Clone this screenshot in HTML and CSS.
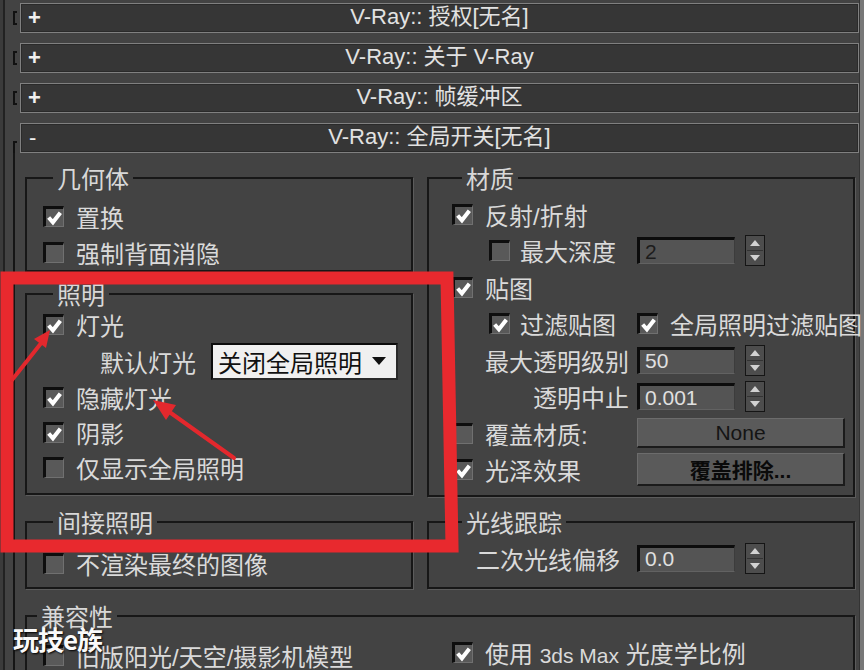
FILE: index.html
```html
<!DOCTYPE html>
<html lang="zh-CN">
<head>
    <meta charset="UTF-8">
    <title>V-Ray 全局开关</title>
    <link rel="stylesheet" href="styles.css">
</head>
<body>
<div class="panel">
    <div class="bar-row">
        <span class="bracket"></span>
        <div class="bar"><span class="sign">+</span><span class="title">V-Ray:: 授权[无名]</span></div>
    </div>
    <div class="bar-row">
        <span class="bracket"></span>
        <div class="bar"><span class="sign">+</span><span class="title">V-Ray:: 关于 V-Ray</span></div>
    </div>
    <div class="bar-row">
        <span class="bracket"></span>
        <div class="bar"><span class="sign">+</span><span class="title">V-Ray:: 帧缓冲区</span></div>
    </div>
    <div class="bar-row open">
        <span class="bracket"></span>
        <div class="bar"><span class="sign minus">-</span><span class="title">V-Ray:: 全局开关[无名]</span></div>
    </div>

    <div class="rollout-body">
        <div class="top-row">
            <div class="col-left">
                <fieldset class="group geometry">
                    <legend>几何体</legend>
                    <div class="row"><span class="cb on"><svg viewBox="0 0 16 16"><polyline points="2.5,8 6.5,12.5 13.5,3.5"/></svg></span><span>置换</span></div>
                    <div class="row"><span class="cb"></span><span>强制背面消隐</span></div>
                </fieldset>

                <fieldset class="group lighting">
                    <legend>照明</legend>
                    <div class="row"><span class="cb on"><svg viewBox="0 0 16 16"><polyline points="2.5,8 6.5,12.5 13.5,3.5"/></svg></span><span>灯光</span></div>
                    <div class="row sub">
                        <span>默认灯光</span>
                        <div class="select"><span>关闭全局照明</span><svg class="arrow" viewBox="0 0 14 8"><polygon points="0,0 14,0 7,8"/></svg></div>
                    </div>
                    <div class="row"><span class="cb on"><svg viewBox="0 0 16 16"><polyline points="2.5,8 6.5,12.5 13.5,3.5"/></svg></span><span>隐藏灯光</span></div>
                    <div class="row"><span class="cb on"><svg viewBox="0 0 16 16"><polyline points="2.5,8 6.5,12.5 13.5,3.5"/></svg></span><span>阴影</span></div>
                    <div class="row"><span class="cb"></span><span>仅显示全局照明</span></div>
                </fieldset>
            </div>

            <fieldset class="group material">
                <legend>材质</legend>
                <div class="row"><span class="cb on"><svg viewBox="0 0 16 16"><polyline points="2.5,8 6.5,12.5 13.5,3.5"/></svg></span><span>反射/折射</span></div>
                <div class="grid-row">
                    <div class="cell indent"><span class="cb"></span><span>最大深度</span></div>
                    <div class="field"><span class="num off">2</span><svg class="spin" viewBox="0 0 20 31"><rect x="0.5" y="0.5" width="19" height="30"/><line x1="2" y1="15.5" x2="18" y2="15.5"/><polygon points="5,11 15,11 10,5"/><polygon points="5,20 15,20 10,26"/></svg></div>
                </div>
                <div class="row"><span class="cb on"><svg viewBox="0 0 16 16"><polyline points="2.5,8 6.5,12.5 13.5,3.5"/></svg></span><span>贴图</span></div>
                <div class="grid-row">
                    <div class="cell indent"><span class="cb on"><svg viewBox="0 0 16 16"><polyline points="2.5,8 6.5,12.5 13.5,3.5"/></svg></span><span>过滤贴图</span></div>
                    <div class="cell"><span class="cb on"><svg viewBox="0 0 16 16"><polyline points="2.5,8 6.5,12.5 13.5,3.5"/></svg></span><span>全局照明过滤贴图</span></div>
                </div>
                <div class="grid-row">
                    <span class="lbl-r">最大透明级别</span>
                    <div class="field"><span class="num">50</span><svg class="spin" viewBox="0 0 20 31"><rect x="0.5" y="0.5" width="19" height="30"/><line x1="2" y1="15.5" x2="18" y2="15.5"/><polygon points="5,11 15,11 10,5"/><polygon points="5,20 15,20 10,26"/></svg></div>
                </div>
                <div class="grid-row">
                    <span class="lbl-r">透明中止</span>
                    <div class="field"><span class="num">0.001</span><svg class="spin" viewBox="0 0 20 31"><rect x="0.5" y="0.5" width="19" height="30"/><line x1="2" y1="15.5" x2="18" y2="15.5"/><polygon points="5,11 15,11 10,5"/><polygon points="5,20 15,20 10,26"/></svg></div>
                </div>
                <div class="grid-row">
                    <div class="cell"><span class="cb"></span><span>覆盖材质:</span></div>
                    <span class="btn">None</span>
                </div>
                <div class="grid-row">
                    <div class="cell"><span class="cb on"><svg viewBox="0 0 16 16"><polyline points="2.5,8 6.5,12.5 13.5,3.5"/></svg></span><span>光泽效果</span></div>
                    <span class="btn strong">覆盖排除...</span>
                </div>
            </fieldset>
        </div>

        <div class="mid-row">
            <fieldset class="group indirect">
                <legend>间接照明</legend>
                <div class="row"><span class="cb"></span><span>不渲染最终的图像</span></div>
            </fieldset>
            <fieldset class="group raytrace">
                <legend>光线跟踪</legend>
                <div class="grid-row">
                    <span class="lbl-r wide">二次光线偏移</span>
                    <div class="field"><span class="num">0.0</span><svg class="spin" viewBox="0 0 20 31"><rect x="0.5" y="0.5" width="19" height="30"/><line x1="2" y1="15.5" x2="18" y2="15.5"/><polygon points="5,11 15,11 10,5"/><polygon points="5,20 15,20 10,26"/></svg></div>
                </div>
            </fieldset>
        </div>

        <fieldset class="group compat">
            <legend>兼容性</legend>
            <div class="compat-grid">
                <div class="cell left"><span class="cb"></span><span>旧版阳光/天空/摄影机模型</span></div>
                <div class="cell right"><span class="cb on"><svg viewBox="0 0 16 16"><polyline points="2.5,8 6.5,12.5 13.5,3.5"/></svg></span><span>使用 <span class="latin">3ds Max</span> 光度学比例</span></div>
            </div>
        </fieldset>
    </div>

    <!-- hand-drawn red markup on top of the panel -->
    <svg class="markup" viewBox="0 0 864 670">
        <path class="frame" d="M7,278 L447,278 L452,546 L7,546 Z"/>
        <line x1="12" y1="380" x2="42" y2="342"/>
        <polygon points="50,330 46,348 34,339"/>
        <line x1="234" y1="458" x2="168" y2="411"/>
        <polygon points="153,400 176,405 166,420"/>
    </svg>
    <div class="watermark">玩技e族</div>
</div>
</body>
</html>
```

FILE: styles.css
```css
* {
    margin: 0;
    padding: 0;
    box-sizing: border-box;
}

body {
    background: #434343;
    font-family: "Liberation Sans", "Noto Sans CJK SC", sans-serif;
    color: #dadada;
    overflow: hidden;
}

.panel {
    position: relative;
    width: 864px;
    height: 670px;
    overflow: hidden;
    padding: 3px 5px 0 0;
    background:
        linear-gradient(to right, #3b3b3b 0 3px, #222 3px 5px, transparent 5px),
        linear-gradient(to left, #777 0 4px, #333 4px 5px, transparent 5px),
        #434343;
}

/* rollout title bars */
.bar-row {
    display: flex;
    align-items: center;
    height: 30px;
    margin-bottom: 10px;
}

.bracket {
    width: 4px;
    height: 14px;
    margin: 0 3px 0 13px;
    border: 2px solid #111;
    border-right: none;
}

.bar-row.open {
    margin-bottom: 0;
    align-items: stretch;
}

.bar-row.open .bracket {
    align-self: flex-end;
    height: 12px;
    border-bottom: none;
}

.bar {
    flex: 1;
    height: 30px;
    display: grid;
    grid-template-columns: 30px 1fr 30px;
    align-items: center;
    background: #363636;
    border: 1px solid #808080;
    box-shadow: inset 0 0 0 1px #2a2a2a;
}

.sign {
    padding-left: 7px;
    font-size: 22px;
    line-height: 22px;
    font-weight: bold;
    color: #f0f0f0;
}

.sign.minus {
    font-weight: normal;
    padding-left: 8px;
}

.title {
    text-align: center;
    font-size: 22px;
    line-height: 22px;
    color: #e2e2e2;
    margin-top: -3px;
}

/* opened rollout */
.rollout-body {
    margin: 0 4px 0 13px;
    height: 600px;
    border-left: 2px solid #151515;
    padding: 12px 0 0 10px;
}

.top-row {
    display: flex;
    gap: 14px;
    align-items: flex-start;
}

.col-left {
    width: 388px;
    display: flex;
    flex-direction: column;
    gap: 9px;
}

.group {
    border: 2px solid #171717;
    box-shadow: 1px 1px 0 #5c5c5c;
    min-width: 0;
}

.group legend {
    margin-left: 10px;
    padding: 0 4px;
    font-size: 24px;
    line-height: 26px;
    font-family: "Noto Sans CJK SC", sans-serif;
    color: #d8d8d8;
}

.geometry { padding: 7px 14px 0 16px; }
.lighting { padding: 0 12px 8px 16px; }
.material { width: 428px; padding: 5px 8px 7px 23px; }

.row {
    display: flex;
    align-items: center;
    height: 36px;
    font-size: 24px;
}

.lighting .row { height: 35px; }
.lighting .row.sub { height: 38px; padding-left: 57px; }
.material .row,
.material .grid-row { height: 36.5px; }

.cb {
    flex: none;
    width: 21px;
    height: 21px;
    margin-right: 12px;
    background: #595959;
    border-top: 3px solid #0e0e0e;
    border-left: 3px solid #0e0e0e;
    border-right: 1px solid #707070;
    border-bottom: 1px solid #707070;
    display: flex;
    align-items: center;
    justify-content: center;
}

.cb svg {
    width: 17px;
    height: 17px;
}

.cb svg polyline {
    fill: none;
    stroke: #ffffff;
    stroke-width: 3.8;
}

.select {
    width: 187px;
    height: 37px;
    margin-left: 15px;
    display: flex;
    align-items: center;
    justify-content: space-between;
    padding: 0 10px 0 5px;
    background: #f0f0f0;
    border-top: 2px solid #0c0c0c;
    border-left: 2px solid #0c0c0c;
    border-right: 2px solid #2a2a2a;
    border-bottom: 2px solid #2a2a2a;
    color: #111;
    font-size: 24px;
}

.select .arrow {
    width: 14px;
    height: 8px;
    fill: #111;
}

/* label column + control column inside the right groups */
.grid-row {
    display: grid;
    grid-template-columns: 177px auto;
    column-gap: 8px;
    align-items: center;
    height: 36px;
    font-size: 24px;
}

.cell {
    display: flex;
    align-items: center;
    white-space: nowrap;
}

.cell.indent { padding-left: 37px; }
.cell.indent .cb { margin-right: 10px; }

.lbl-r {
    justify-self: end;
    white-space: nowrap;
}

.lbl-r.wide { padding-right: 9px; }

.field {
    display: flex;
    align-items: center;
    gap: 10px;
}

.num {
    width: 98px;
    height: 27px;
    display: flex;
    align-items: center;
    padding-left: 5px;
    background: #545454;
    border-top: 3px solid #0c0c0c;
    border-left: 3px solid #0c0c0c;
    border-right: 1px solid #3c3c3c;
    border-bottom: 1px solid #626262;
    font-size: 21px;
    color: #e0e0e0;
}

.num.off { color: #1c1c1c; }

.spin {
    width: 20px;
    height: 31px;
}

.spin rect { fill: #4d4d4d; stroke: #151515; }
.spin line { stroke: #333; }
.spin polygon { fill: #d2d2d2; }

.grid-row .btn {
    width: 208px;
    height: 30px;
    display: flex;
    align-items: center;
    justify-content: center;
    background: #5a5a5a;
    border-top: 1px solid #6c6c6c;
    border-left: 1px solid #6c6c6c;
    border-right: 2px solid #1b1b1b;
    border-bottom: 2px solid #1b1b1b;
    font-size: 21px;
    color: #141414;
}

.grid-row .btn.strong {
    height: 33px;
    font-weight: bold;
    color: #0a0a0a;
}

.mid-row {
    display: flex;
    gap: 14px;
    margin-top: 12px;
}

.indirect { width: 388px; padding: 10px 12px 6px 16px; }
.raytrace { width: 428px; padding: 5px 8px 0 23px; }

.compat {
    margin-top: 14px;
    padding: 5px 0 0 0;
}

.compat-grid {
    display: grid;
    grid-template-columns: 402px 1fr;
    align-items: center;
    font-size: 24px;
}

.compat-grid .cell { height: 36px; }
.compat-grid .left { padding-left: 16px; padding-top: 6px; }
.compat-grid .right { padding-left: 23px; }

.latin { font-size: 21px; }

/* red annotations */
.markup {
    position: absolute;
    top: 0;
    left: 0;
    width: 864px;
    height: 670px;
    pointer-events: none;
}

.markup .frame {
    fill: none;
    stroke: #e8292e;
    stroke-width: 13;
    stroke-linejoin: miter;
}

.markup line {
    stroke: #e3282d;
    stroke-width: 4;
    stroke-linecap: round;
}

.markup polygon { fill: #e3282d; }

.watermark {
    position: absolute;
    left: 13px;
    top: 620px;
    font-family: "Noto Sans CJK SC", sans-serif;
    font-size: 26px;
    font-weight: bold;
    color: #fafafa;
    letter-spacing: -1px;
    text-shadow: 1px 1px 2px #000;
}
```
